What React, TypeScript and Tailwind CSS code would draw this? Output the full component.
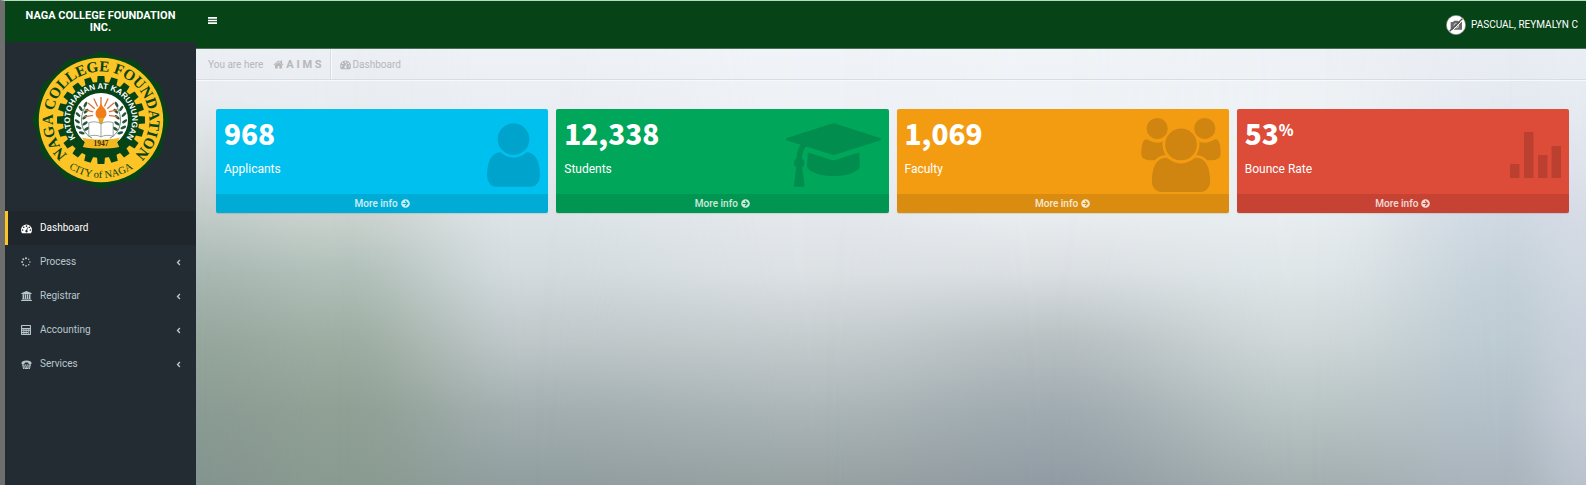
import type { ReactNode } from "react";
import { FaAngleLeft, FaArrowCircleRight } from "react-icons/fa";

/* ---------- Backdrop: columns of vertical colour stops, blended left to right ---------- */

const rows = [0, 12, 26, 38, 51, 67, 83, 100];
const columns: { at: number; colors: string[] }[] = [
  { at: 0, colors: ["#eceff4", "#e8ecf0", "#d6dcdd", "#c2ccc9", "#a9b9b3", "#96a79e", "#8b9c94", "#84948f"] },
  { at: 10, colors: ["#eceff4", "#e9edf1", "#dde2e3", "#cad2ce", "#b1c0ba", "#9dada2", "#90a095", "#899b91"] },
  { at: 24, colors: ["#eef1f5", "#ebeef3", "#e4e9ed", "#dde4e7", "#d3dbde", "#bfc7c9", "#a3afb0", "#919e9f"] },
  { at: 45, colors: ["#f0f3f7", "#eef1f5", "#eaedf1", "#e4e8ec", "#dce1e4", "#c4cbcd", "#abb5b7", "#97a1a2"] },
  { at: 61, colors: ["#f0f4f7", "#eff2f6", "#edf0f3", "#e9edf0", "#dadfe2", "#b8c0c2", "#a0abb1", "#919ba3"] },
  { at: 80, colors: ["#edf1f5", "#eef2f5", "#ecf0f2", "#e8edef", "#dfe6e8", "#cfd7d8", "#b9c4c4", "#a4afb0"] },
  { at: 94, colors: ["#e8ecf3", "#e5eaf1", "#dbe1ea", "#d0d9e2", "#c6d2da", "#bdcbd2", "#b4c0c9", "#a9b4bd"] },
  { at: 100, colors: ["#e9edf4", "#e6ebf2", "#dee3ec", "#d6dbe5", "#cfd7e1", "#c8d1db", "#c4ccd6", "#b9c2cc"] },
];

const ease = [0, 0.1, 0.2, 0.3, 0.4, 0.5, 0.6, 0.7, 0.8, 0.9, 1];

function easedMask(from: number, to: number) {
  const stops = ease.map((t) => `rgb(0 0 0 / ${t * t * (3 - 2 * t)}) ${from + (to - from) * t}%`);
  return `linear-gradient(to right, ${stops.join(", ")})`;
}

function Backdrop() {
  return (
    <div aria-hidden="true" className="col-start-1 row-start-1 grid">
      {columns.map(({ at, colors }, i) => {
        const stops = colors.map((c, k) => `${c} ${rows[k]}%`).join(", ");
        return (
          <div
            key={at}
            className="col-start-1 row-start-1"
            style={{
              backgroundImage: `linear-gradient(to bottom, ${stops})`,
              maskImage: i === 0 ? undefined : easedMask(columns[i - 1].at, at),
            }}
          />
        );
      })}
    </div>
  );
}

/* ---------- Icons ---------- */

type IconProps = { className?: string };

const MenuIcon = ({ className }: IconProps) => (
  <svg viewBox="0 0 18 14" fill="currentColor" className={className} aria-hidden="true">
    <path d="M0 0h18v3.400H0zM0 5.300h18v3.400H0zM0 10.600h18V14H0z" />
  </svg>
);

const HomeIcon = ({ className }: IconProps) => (
  <svg viewBox="0 0 1792 1792" fill="currentColor" className={className} aria-hidden="true">
    <path d="M1472 992v480q0 26-19 45t-45 19h-384v-384h-256v384h-384q-26 0-45-19t-19-45v-480q0-1 .5-3t.5-3l575-474 575 474q1 2 1 6zm223-69l-62 74q-8 9-21 11h-3q-13 0-21-7l-692-577-692 577q-12 8-24 7-13-2-21-11l-62-74q-8-10-7-23.5t11-21.5l719-599q32-26 76-26t76 26l244 204v-195q0-14 9-23t23-9h192q14 0 23 9t9 23v408l219 182q10 8 11 21.5t-7 23.5z" />
  </svg>
);

const DashboardIcon = ({ className }: IconProps) => (
  <svg viewBox="0 0 1792 1792" fill="currentColor" className={className} aria-hidden="true">
    <path d="M384 1152q0-53-37.5-90.5t-90.5-37.5-90.5 37.5-37.5 90.5 37.5 90.5 90.5 37.5 90.5-37.5 37.5-90.5zm192-448q0-53-37.5-90.5t-90.5-37.5-90.5 37.5-37.5 90.5 37.5 90.5 90.5 37.5 90.5-37.5 37.5-90.5zm428 481l101-382q6-26-7.5-48.5t-38.5-29.5-48 6.5-30 39.5l-101 382q-60 5-107 43.5t-63 98.5q-20 77 20 146t117 89 146-20 89-117q16-60-6-117t-72-91zm660-33q0-53-37.5-90.5t-90.5-37.5-90.5 37.5-37.5 90.5 37.5 90.5 90.5 37.5 90.5-37.5 37.5-90.5zm-640-640q0-53-37.5-90.5t-90.5-37.5-90.5 37.5-37.5 90.5 37.5 90.5 90.5 37.5 90.5-37.5 37.5-90.5zm448 192q0-53-37.5-90.5t-90.5-37.5-90.5 37.5-37.5 90.5 37.5 90.5 90.5 37.5 90.5-37.5 37.5-90.5zm320 448q0 261-141 483-19 29-54 29h-1402q-35 0-54-29-141-221-141-483 0-182 71-348t191-286 286-191 348-71 348 71 286 191 191 286 71 348z" />
  </svg>
);

const SpinnerIcon = ({ className }: IconProps) => (
  <svg viewBox="0 0 20 20" fill="currentColor" className={className} aria-hidden="true">
    <circle cx="10" cy="2.4" r="2.1" />
    <circle cx="15.4" cy="4.6" r="1.4" />
    <circle cx="17.7" cy="10" r="1.5" />
    <circle cx="15.4" cy="15.4" r="1.6" />
    <circle cx="10" cy="17.7" r="1.7" />
    <circle cx="4.6" cy="15.4" r="1.8" />
    <circle cx="2.3" cy="10" r="1.9" />
    <circle cx="4.6" cy="4.6" r="2" />
  </svg>
);

const BankIcon = ({ className }: IconProps) => (
  <svg viewBox="0 0 1920 1792" fill="currentColor" className={className} aria-hidden="true">
    <path d="M960 0l960 384v128h-128q0 26-20.5 45t-48.5 19h-1526q-28 0-48.5-19t-20.5-45h-128v-128zm-704 640h256v768h128v-768h256v768h128v-768h256v768h128v-768h256v768h59q28 0 48.5 19t20.5 45v64h-1664v-64q0-26 20.5-45t48.5-19h59v-768zm1595 960q28 0 48.5 19t20.5 45v128h-1920v-128q0-26 20.5-45t48.5-19h1782z" />
  </svg>
);

const CalculatorIcon = ({ className }: IconProps) => (
  <svg viewBox="0 0 20 20" fill="currentColor" fillRule="evenodd" className={className} aria-hidden="true">
    <path d="M1.5 0h17A1.5 1.5 0 0 1 20 1.500v17a1.500 1.500 0 0 1-1.500 1.500h-17A1.500 1.500 0 0 1 0 18.500v-17A1.500 1.500 0 0 1 1.500 0zM2.200 2.200v4h15.600v-4zM2.400 8.400v2h2.400v-2zM6.800 8.400v2h2.400v-2zM11.200 8.400v2h2.400v-2zM15.400 8.400v2h2.200v-2zM2.400 12.200v2h2.400v-2zM6.800 12.200v2h2.400v-2zM11.200 12.200v2h2.400v-2zM2.400 16v2h2.400v-2zM6.800 16v2h2.400v-2zM11.200 16v2h2.400v-2zM15.400 12.200v5.800h2.200v-5.800z" />
  </svg>
);

const TtyIcon = ({ className }: IconProps) => (
  <svg viewBox="0 0 20 18" fill="currentColor" className={className} aria-hidden="true">
    <path d="M0 6.500C0 2.500 4 .8 10 .8s10 1.700 10 5.700v.8c0 .6-.5 1-1 1h-4c-.6 0-1-.4-1-1V5.800C12 5 8 5 6 5.800v1.500c0 .6-.4 1-1 1H1c-.5 0-1-.4-1-1z" />
    <path d="M1 9.200h4.500v2.500H1zM6.300 9.200h3.200v2.500H6.300zM10.500 9.200h3.200v2.500h-3.200zM14.500 9.200H19v2.500h-4.500zM2 12.300h4.800v2.500H2zM7.800 12.300h4.400v2.500H7.800zM13.200 12.300H18v2.500h-4.800zM3 15.400h2.600v2.500H3zM6.400 15.400h7.200v2.500H6.400zM14.400 15.400H17v2.500h-2.600z" />
  </svg>
);

const UserIcon = ({ className }: IconProps) => (
  <svg viewBox="256 0 1280 1792" fill="currentColor" className={className} aria-hidden="true">
    <path d="M1536 1399q0 109-62.500 187t-150.500 78h-854q-88 0-150.500-78t-62.500-187q0-85 8.500-160.500t31.500-152 58.500-131 94-89 134.500-34.500q131 128 313 128t313-128q76 0 134.500 34.500t94 89 58.500 131 31.500 152 8.500 160.500zm-256-887q0 159-112.500 271.500t-271.500 112.500-271.500-112.500-112.500-271.500 112.500-271.500 271.500-112.500 271.500 112.500 112.500 271.500z" />
  </svg>
);

const CapIcon = ({ className }: IconProps) => (
  <svg viewBox="0 0 2304 1792" fill="currentColor" className={className} aria-hidden="true">
    <path d="M1774 836l18 316q4 69-82 128t-235 93.500-323 34.500-323-34.500-235-93.500-82-128l18-316 574 181q22 7 48 7t48-7zm530-324q0 23-22 31l-1120 352q-4 1-10 1t-10-1l-652-206q-43 34-71 111.500t-34 178.500q63 36 63 109 0 69-58 107l58 433q2 14-8 25-9 11-24 11h-192q-15 0-24-11-10-11-8-25l58-433q-58-38-58-107 0-73 65-111 11-207 98-330l-333-104q-22-8-22-31t22-31l1120-352q4-1 10-1t10 1l1120 352q22 8 22 31z" />
  </svg>
);

const UsersIcon = ({ className }: IconProps) => (
  <svg viewBox="0 0 1920 1792" fill="currentColor" className={className} aria-hidden="true">
    <path d="M593 896q-162 5-265 128h-134q-82 0-138-40.500t-56-118.500q0-353 124-353 6 0 43.500 21t97.500 42.500 119 21.500q67 0 133-23-5 37-5 66 0 139 81 256zm1071 637q0 120-73 189.500t-194 69.500h-874q-121 0-194-69.500t-73-189.500q0-53 3.500-103.500t14-109 26.500-108.500 43-97.500 62-81 85.500-53.500 111.500-20q10 0 43 21.500t73 48 107 48 135 21.500 135-21.500 107-48 73-48 43-21.500q61 0 111.500 20t85.500 53.500 62 81 43 97.500 26.500 108.500 14 109 3.500 103.500zm-1024-1277q0 106-75 181t-181 75-181-75-75-181 75-181 181-75 181 75 75 181zm704 384q0 159-112.500 271.500t-271.500 112.500-271.500-112.500-112.500-271.500 112.500-271.500 271.500-112.500 271.500 112.500 112.500 271.500zm576 225q0 78-56 118.500t-138 40.500h-134q-103-123-265-128 81-117 81-256 0-29-5-66 66 23 133 23 59 0 119-21.500t97.500-42.500 43.500-21q124 0 124 353zm-128-609q0 106-75 181t-181 75-181-75-75-181 75-181 181-75 181 75 75 181z" />
  </svg>
);

const BarsIcon = ({ className }: IconProps) => (
  <svg viewBox="0 0 51 46" fill="currentColor" className={className} aria-hidden="true">
    <path d="M0 32h9.500v14H0zM14 0h9.500v46H14zM28 23h9.500v23H28zM41.500 14H51v32h-9.500z" />
  </svg>
);

const NoPhotoIcon = ({ className }: IconProps) => (
  <svg viewBox="0 0 60 60" className={className} role="img" aria-label="No photo">
    <circle cx="30" cy="30" r="29" fill="#fff" stroke="#6f7f74" strokeWidth="2" />
    <path fill="#6b6b6b" d="M14 21h7l3-4h12l3 4h9v23H14z" />
    <circle cx="31" cy="32" r="8" fill="#c9c9c9" />
    <circle cx="31" cy="32" r="5" fill="#6b6b6b" />
    <path d="M14 52L52 14" stroke="#fff" strokeWidth="3" />
    <path d="M11 49L49 11" stroke="#555" strokeWidth="4" />
  </svg>
);

/* ---------- College seal ---------- */

const around = (count: number) => Array.from({ length: count }, (_, i) => (i * 360) / count);

function Leaf({ x, y, turn }: { x: number; y: number; turn: number }) {
  return <ellipse cx={x} cy={y} rx="9" ry="4" transform={`rotate(${turn} ${x} ${y})`} />;
}

function Laurel() {
  return (
    <g fill="#24563a">
      <path d="M-26 54C-62 36-66-10-44-44" fill="none" stroke="#24563a" strokeWidth="2" />
      <Leaf x={-46} y={-46} turn={-60} />
      <Leaf x={-60} y={-34} turn={55} />
      <Leaf x={-44} y={-26} turn={-45} />
      <Leaf x={-68} y={-16} turn={45} />
      <Leaf x={-48} y={-8} turn={-40} />
      <Leaf x={-70} y={4} turn={35} />
      <Leaf x={-47} y={10} turn={-35} />
      <Leaf x={-66} y={22} turn={25} />
      <Leaf x={-42} y={26} turn={-30} />
      <Leaf x={-57} y={38} turn={15} />
    </g>
  );
}

function Seal() {
  return (
    <svg viewBox="-204 -204 408 408" className="size-[138px]" role="img" aria-label="Naga College Foundation seal">
      <defs>
        <path id="seal-outer" d="M-99 103A143 143 0 1 1 99 103" />
        <path id="seal-inner" d="M-64 66A92 92 0 1 1 64 66" />
        <path id="seal-lower" d="M-125 117A171 171 0 0 0 125 117" />
      </defs>
      <g fill="#064317">
        <circle r="194" />
        {around(12).map((a) => (
          <circle key={a} cy="-160" r="42" transform={`rotate(${a})`} />
        ))}
      </g>
      <circle r="184" fill="#fcc425" />
      <g fill="#064317">
        <circle r="113" />
        {around(20).map((a) => (
          <path key={a} d="M-12-108L-10-130H10L12-108z" transform={`rotate(${a})`} />
        ))}
      </g>
      <circle r="80" fill="#fff" />
      <Laurel />
      <g transform="scale(-1 1)">
        <Laurel />
      </g>
      <g stroke="#d9743b" strokeWidth="4">
        {[-100, -75, -50, -25, 0, 25, 50, 75, 100].map((a) => (
          <path key={a} d="M0-24V-50" transform={`translate(0 -18) rotate(${a})`} />
        ))}
      </g>
      <path d="M0-50C4-36 18-32 16-18 15-8 8-4 0-4S-15-8-16-18C-17-32-4-34 0-50z" fill="#ef7d1a" />
      <path d="M-9-6H9L4 12H-4z" fill="#e9a12c" />
      <path d="M0 12C-10 4-24 4-36 8V48C-24 44-10 44 0 50 10 44 24 44 36 48V8C24 4 10 4 0 12zV50" fill="#fff" stroke="#6d7a72" strokeWidth="2" />
      <path d="M-56 52C-30 60 30 60 56 52L48 66 54 80C26 86-26 86-54 80L-48 66z" fill="#f2b721" />
      <text y="76" textAnchor="middle" className="fill-[#3b2f10] font-['Liberation_Serif',serif] text-[22px] font-bold">
        1947
      </text>
      <text className="fill-[#064317] font-['Liberation_Serif',serif] text-[45px] font-bold">
        <textPath href="#seal-outer" startOffset="50%" textAnchor="middle">
          NAGA COLLEGE FOUNDATION
        </textPath>
      </text>
      <text className="fill-white font-['Liberation_Sans',sans-serif] text-[24px] font-bold">
        <textPath href="#seal-inner" startOffset="50%" textAnchor="middle">
          KATOTOHANAN AT KARUNUNGAN
        </textPath>
      </text>
      <text className="fill-[#064317] font-['Liberation_Serif',serif] text-[31px]">
        <textPath href="#seal-lower" startOffset="50%" textAnchor="middle">
          CITY of NAGA
        </textPath>
      </text>
    </svg>
  );
}

/* ---------- Sidebar ---------- */

const menu: { label: string; icon: ReactNode; active?: boolean }[] = [
  { label: "Dashboard", icon: <DashboardIcon className="size-[11px]" />, active: true },
  { label: "Process", icon: <SpinnerIcon className="size-[10px]" /> },
  { label: "Registrar", icon: <BankIcon className="h-[10px] w-[11px]" /> },
  { label: "Accounting", icon: <CalculatorIcon className="size-[10px]" /> },
  { label: "Services", icon: <TtyIcon className="h-[9px] w-[11px]" /> },
];

function Sidebar() {
  return (
    <aside className="flex w-[191px] shrink-0 flex-col bg-[#242c33]">
      <a
        href="#"
        className="flex h-[41px] items-center justify-center bg-[#064317] px-4 text-center text-[11px] leading-[12px] font-bold text-white"
      >
        NAGA COLLEGE FOUNDATION INC.
      </a>
      <div className="flex justify-center pt-[9px] pb-[22px]">
        <Seal />
      </div>
      <nav>
        <ul>
          {menu.map((item) => (
            <li key={item.label}>
              <a
                href="#"
                className={
                  item.active
                    ? "flex h-[34px] items-center border-l-3 border-[#fcc425] bg-[#1f272c] px-[13px] text-white"
                    : "flex h-[34px] items-center border-l-3 border-transparent px-[13px] text-[#b8c7ce]"
                }
              >
                <span className="flex w-[19px]">{item.icon}</span>
                <span className="grow">{item.label}</span>
                {!item.active && <FaAngleLeft className="size-[9px]" aria-hidden="true" />}
              </a>
            </li>
          ))}
        </ul>
      </nav>
    </aside>
  );
}

/* ---------- Summary cards ---------- */

type Card = { value: string; unit?: string; label: string; tone: string; iconTone: string; icon: ReactNode };

const cards: Card[] = [
  {
    value: "968",
    label: "Applicants",
    tone: "bg-[#00c0ef]",
    iconTone: "text-[#00a3cb]",
    icon: <UserIcon className="h-[74px] w-[53px]" />,
  },
  {
    value: "12,338",
    label: "Students",
    tone: "bg-[#00a65a]",
    iconTone: "text-[#008d4d]",
    icon: <CapIcon className="h-[74px] w-[95px]" />,
  },
  {
    value: "1,069",
    label: "Faculty",
    tone: "bg-[#f39c12]",
    iconTone: "text-[#cf850f]",
    icon: <UsersIcon className="h-[74px] w-[80px]" />,
  },
  {
    value: "53",
    unit: "%",
    label: "Bounce Rate",
    tone: "bg-[#dd4b39]",
    iconTone: "text-[#bc4030]",
    icon: <BarsIcon className="h-[46px] w-[51px]" />,
  },
];

function SummaryCard({ value, unit, label, tone, iconTone, icon }: Card) {
  return (
    <section className={`flex flex-col overflow-hidden rounded-[2px] text-white shadow-[0_1px_1px_rgba(0,0,0,0.1)] ${tone}`}>
      <div className="flex h-[85px] justify-between px-2">
        <div className="pt-2">
          <h3 className="flex font-['Noto_Sans_CJK_SC','Noto_Sans',sans-serif] text-[28px] leading-[32px] font-black">
            {value}
            {unit && <sup className="top-0 text-[15px] leading-[26px]">{unit}</sup>}
          </h3>
          <p className="pt-3 text-[12px] leading-[16px]">{label}</p>
        </div>
        <div className={`flex h-[92px] shrink-0 items-center ${iconTone}`}>{icon}</div>
      </div>
      <a
        href="#"
        className="flex h-[19px] items-center justify-center gap-[3px] bg-black/10 font-medium text-white/80"
      >
        More info
        <FaArrowCircleRight className="size-[9px]" aria-hidden="true" />
      </a>
    </section>
  );
}

/* ---------- Page ---------- */

export default function App() {
  return (
    <div className="flex min-h-screen border-t border-l-5 border-t-[#b5dcc0] border-l-[#6e6e6e] bg-[#242c33] font-['Roboto','Liberation_Sans',sans-serif] text-[10px] leading-[14px]">
      <Sidebar />
      <div className="flex grow flex-col">
        <header className="flex h-[48px] items-center justify-between border-b border-[#48705a] bg-[#064317] pr-2 pl-3 text-white">
          <button type="button" aria-label="Toggle navigation" className="mb-[9px]">
            <MenuIcon className="h-[7px] w-[9px]" />
          </button>
          <a href="#" className="flex items-center gap-[5px]">
            <NoPhotoIcon className="size-[20px]" />
            PASCUAL, REYMALYN C
          </a>
        </header>
        <div className="grid grow">
          <Backdrop />
          <main className="z-10 col-start-1 row-start-1">
            <nav aria-label="Breadcrumb" className="border-b border-[#d9dce2] shadow-[0_1px_0_#f8f9fb]">
              <ol className="flex h-[30px] text-[#b5b7ba]">
                <li className="flex items-center border-r border-[#d9dce2] pt-px pr-2 pl-3 shadow-[1px_0_0_#f8f9fb]">
                  You are here
                  <a href="#" className="ml-[10px] flex items-center gap-[2px] text-[11px] font-bold">
                    <HomeIcon className="size-[11px]" />A I M S
                  </a>
                </li>
                <li className="flex items-center gap-[2px] pt-px pl-[9px]">
                  <DashboardIcon className="size-[11px]" />
                  Dashboard
                </li>
              </ol>
            </nav>
            <div className="grid grid-cols-4 gap-2 pt-[29px] pr-[17px] pl-5">
              {cards.map((card) => (
                <SummaryCard key={card.label} {...card} />
              ))}
            </div>
          </main>
        </div>
      </div>
    </div>
  );
}
